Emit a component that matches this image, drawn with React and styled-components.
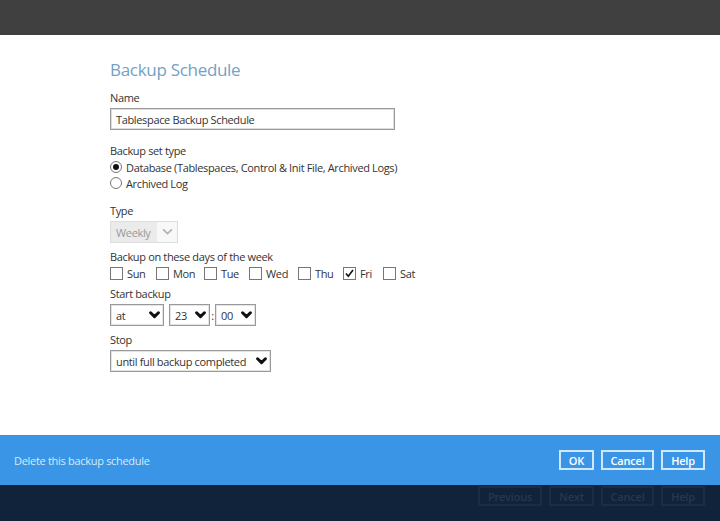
import React from "react";
import styled, { createGlobalStyle } from "styled-components";

const GlobalStyle = createGlobalStyle`
  html, body {
    margin: 0;
    padding: 0;
    background: #fff;
    font-family: "Open Sans", "Liberation Sans", sans-serif;
  }
`;

const Page = styled.div`
  width: 720px;
  height: 521px;
  display: flex;
  flex-direction: column;
  overflow: hidden;
`;

const TopBar = styled.div`
  height: 35px;
  background: #404040;
  flex-shrink: 0;
`;

const Content = styled.div`
  flex: 1;
  min-height: 0;
  padding: 23px 0 0 110px;
  color: #333;
  font-size: 11px;
  letter-spacing: -0.35px;
  white-space: nowrap;
`;

const Title = styled.h1`
  margin: 0 0 8px;
  font-size: 17px;
  font-weight: 400;
  line-height: 24px;
  letter-spacing: -0.3px;
  color: #72a2c5;
`;

const Field = styled.div`
  margin-top: ${(p) => p.gap || 0}px;
`;

const Label = styled.div`
  line-height: 16px;
  margin-bottom: ${(p) => (p.tight ? 0 : 2)}px;
`;

const TextInput = styled.div`
  width: 285px;
  height: 22px;
  box-sizing: border-box;
  border: 1px solid #999;
  box-shadow: inset 0 0 0 1px #ddd;
  padding: 0 5px;
  display: flex;
  align-items: center;
`;

const OptionRow = styled.div`
  display: flex;
  align-items: center;
  height: 16px;
`;

const Option = styled.label`
  display: flex;
  align-items: center;
  gap: 4px;
  width: ${(p) => (p.w ? `${p.w}px` : "auto")};
`;

const Radio = styled.span`
  width: 12px;
  height: 12px;
  box-sizing: border-box;
  border: 1px solid #777;
  border-radius: 50%;
  display: flex;
  align-items: center;
  justify-content: center;
  &::after {
    content: "";
    width: 6px;
    height: 6px;
    border-radius: 50%;
    background: ${(p) => (p.on ? "#111" : "transparent")};
  }
`;

const Box = styled.span`
  width: 13px;
  height: 13px;
  box-sizing: border-box;
  border: 1px solid #777;
  display: flex;
  align-items: center;
  justify-content: center;
`;

const SelectRow = styled.div`
  display: flex;
  align-items: center;
`;

const Select = styled.div`
  width: ${(p) => p.w}px;
  height: 22px;
  box-sizing: border-box;
  border: 1px solid ${(p) => (p.disabled ? "#ddd" : "#999")};
  box-shadow: ${(p) => (p.disabled ? "none" : "inset 0 0 0 1px #e4e4e4")};
  background: ${(p) => (p.disabled ? "#ebebeb" : "#fff")};
  color: ${(p) => (p.disabled ? "#999" : "#333")};
  display: flex;
  align-items: center;
  justify-content: space-between;
  padding-left: 5px;
  margin-right: ${(p) => p.space || 0}px;
`;

const Arrow = styled.span`
  align-self: stretch;
  width: ${(p) => (p.disabled ? 20 : 18)}px;
  display: flex;
  align-items: center;
  justify-content: center;
  background: ${(p) => (p.disabled ? "#f8f8f8" : "transparent")};
`;

const Colon = styled.span`
  width: 5px;
  text-align: center;
`;

const Footer = styled.div`
  height: 50px;
  flex-shrink: 0;
  background: #3a95e6;
  display: flex;
  align-items: center;
  justify-content: space-between;
  padding: 0 15px 0 14px;
`;

const DeleteLink = styled.span`
  color: #d5eafb;
  font-size: 11px;
  letter-spacing: -0.3px;
`;

const ButtonGroup = styled.div`
  display: flex;
  gap: 7px;
`;

const Button = styled.div`
  width: ${(p) => p.w}px;
  height: 20px;
  box-sizing: border-box;
  border: 2px solid ${(p) => (p.ghost ? "#1b2d43" : "#cfe9fc")};
  color: ${(p) => (p.ghost ? "#25384f" : "#fff")};
  font-size: 11px;
  font-weight: 600;
  letter-spacing: -0.2px;
  display: flex;
  align-items: center;
  justify-content: center;
`;

const BottomBar = styled.div`
  height: 36px;
  flex-shrink: 0;
  background: #11233a;
  display: flex;
  justify-content: flex-end;
  align-items: flex-start;
  padding: 1px 15px 0 0;
  box-sizing: border-box;
`;

const Chevron = ({ color = "#111", bold = true }) => (
  <svg width="11" height="8" viewBox="0 0 11 8">
    <polyline
      points="1.6,1.8 5.5,5.6 9.4,1.8"
      fill="none"
      stroke={color}
      strokeWidth={bold ? 3 : 1.8}
      strokeLinecap="round"
      strokeLinejoin="round"
    />
  </svg>
);

const Check = () => (
  <svg width="11" height="11" viewBox="0 0 11 11">
    <polyline points="2,5.5 4.3,8.3 9,2" fill="none" stroke="#111" strokeWidth="1.6" />
  </svg>
);

const days = [
  { name: "Sun", w: 46 },
  { name: "Mon", w: 48 },
  { name: "Tue", w: 45 },
  { name: "Wed", w: 49 },
  { name: "Thu", w: 45 },
  { name: "Fri", w: 40, checked: true },
  { name: "Sat" },
];

export default function App() {
  return (
    <Page>
      <GlobalStyle />
      <TopBar />
      <Content>
        <Title>Backup Schedule</Title>
        <Field>
          <Label>Name</Label>
          <TextInput>Tablespace Backup Schedule</TextInput>
        </Field>
        <Field gap={13}>
          <Label tight>Backup set type</Label>
          <OptionRow>
            <Option>
              <Radio on />
              Database (Tablespaces, Control &amp; Init File, Archived Logs)
            </Option>
          </OptionRow>
          <OptionRow>
            <Option>
              <Radio />
              Archived Log
            </Option>
          </OptionRow>
        </Field>
        <Field gap={12}>
          <Label>Type</Label>
          <Select w={68} disabled>
            Weekly
            <Arrow disabled>
              <Chevron color="#b5b5b5" bold={false} />
            </Arrow>
          </Select>
        </Field>
        <Field gap={6}>
          <Label tight>Backup on these days of the week</Label>
          <OptionRow>
            {days.map((d) => (
              <Option key={d.name} w={d.w}>
                <Box>{d.checked && <Check />}</Box>
                {d.name}
              </Option>
            ))}
          </OptionRow>
        </Field>
        <Field gap={5}>
          <Label>Start backup</Label>
          <SelectRow>
            <Select w={54} space={5}>
              at
              <Arrow>
                <Chevron />
              </Arrow>
            </Select>
            <Select w={41}>
              23
              <Arrow>
                <Chevron />
              </Arrow>
            </Select>
            <Colon>:</Colon>
            <Select w={41}>
              00
              <Arrow>
                <Chevron />
              </Arrow>
            </Select>
          </SelectRow>
        </Field>
        <Field gap={6}>
          <Label>Stop</Label>
          <Select w={161}>
            until full backup completed
            <Arrow>
              <Chevron />
            </Arrow>
          </Select>
        </Field>
      </Content>
      <Footer>
        <DeleteLink>Delete this backup schedule</DeleteLink>
        <ButtonGroup>
          <Button w={35}>OK</Button>
          <Button w={53}>Cancel</Button>
          <Button w={44}>Help</Button>
        </ButtonGroup>
      </Footer>
      <BottomBar>
        <ButtonGroup>
          <Button ghost w={64}>Previous</Button>
          <Button ghost w={45}>Next</Button>
          <Button ghost w={53}>Cancel</Button>
          <Button ghost w={44}>Help</Button>
        </ButtonGroup>
      </BottomBar>
    </Page>
  );
}
